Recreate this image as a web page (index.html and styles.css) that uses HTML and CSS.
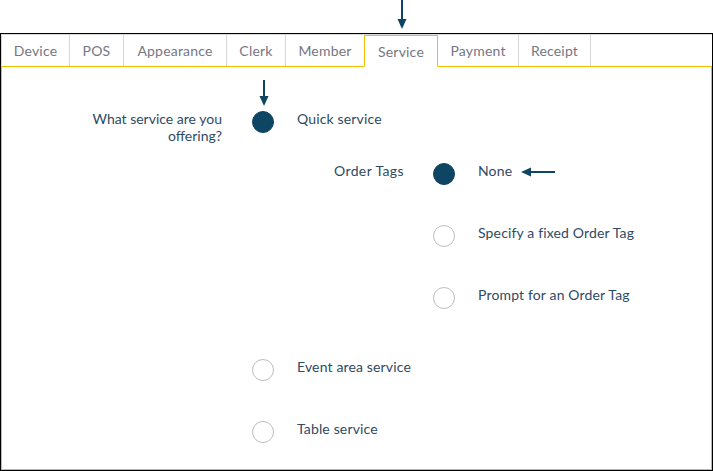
FILE: index.html
```html
<!DOCTYPE html>
<html>
<head>
<meta charset="utf-8">
<link rel="stylesheet" href="styles.css">
</head>
<body>
<div class="frame">
  <nav class="tabs">
    <div class="tab w-device">Device</div>
    <div class="tab w-pos">POS</div>
    <div class="tab w-appearance">Appearance</div>
    <div class="tab w-clerk">Clerk</div>
    <div class="tab w-member">Member</div>
    <div class="tab active w-service">Service</div>
    <div class="tab w-payment">Payment</div>
    <div class="tab last w-receipt">Receipt</div>
  </nav>
  <section class="content">
    <div class="row">
      <div class="q-label">What service are you offering?</div>
      <div class="options">
        <div class="opt"><span class="radio on"></span><span class="opt-text">Quick service</span></div>
        <div class="sub">
          <div class="sub-label">Order Tags</div>
          <div class="sub-options">
            <div class="opt"><span class="radio on"></span><span class="opt-text">None</span></div>
            <div class="opt gap39"><span class="radio"></span><span class="opt-text">Specify a fixed Order Tag</span></div>
            <div class="opt gap39"><span class="radio"></span><span class="opt-text">Prompt for an Order Tag</span></div>
          </div>
        </div>
        <div class="opt gap49"><span class="radio"></span><span class="opt-text">Event area service</span></div>
        <div class="opt gap39"><span class="radio"></span><span class="opt-text">Table service</span></div>
      </div>
    </div>
  </section>
</div>

<svg class="arrow a-top" width="12" height="30" viewBox="0 0 12 30"><rect x="5" y="0" width="2" height="21" fill="#0d4562"/><polygon points="1.5,19 10.5,19 6,29" fill="#0d4562"/></svg>
<svg class="arrow a-mid" width="12" height="30" viewBox="0 0 12 30"><rect x="5" y="0" width="2" height="18" fill="#0d4562"/><polygon points="1.5,16 10.5,16 6,26" fill="#0d4562"/></svg>
<svg class="arrow a-left" width="34" height="12" viewBox="0 0 34 12"><rect x="8" y="5" width="26" height="2" fill="#0d4562"/><polygon points="0,6 10,1.5 10,10.5" fill="#0d4562"/></svg>
</body>
</html>
```

FILE: styles.css
```css
* { box-sizing: border-box; }
html, body { margin: 0; padding: 0; background: #fff; }
body {
  font-family: "Lato", "Open Sans", sans-serif;
  font-size: 14px;
  width: 713px;
  height: 471px;
  position: relative;
  overflow: hidden;
}
.frame {
  margin-top: 33px;
  width: 713px;
  height: 438px;
  border: 1px solid #000;
  display: flex;
  flex-direction: column;
}
.tabs {
  display: flex;
  height: 33px;
  border-top: 1px solid #d9d9d9;
  border-bottom: 1px solid #f0c000;
  position: relative;
  z-index: 1;
}
.tab {
  height: 31px;
  border-left: 1px solid #d6d6d6;
  color: #767684;
  display: flex;
  align-items: center;
  justify-content: center;
  line-height: 17px;
  letter-spacing: 0.2px;
}
.tab.last { border-right: 1px solid #d6d6d6; }
.tab.active {
  border: 1px solid #f0c000;
  border-bottom: 1px solid #fff;
  height: 32px;
  background: #fff;
  margin-bottom: -1px;
}
.tab.active + .tab { border-left: none; }
.w-device { width: 68px; }
.w-pos { width: 54px; }
.w-appearance { width: 103px; }
.w-clerk { width: 59px; }
.w-member { width: 79px; }
.w-service { width: 74px; }
.w-payment { width: 80px; }
.w-receipt { width: 73px; }

.content {
  flex: 1;
  border: 1px solid #f0c000;
  border-top: none;
  padding-top: 43px;
}
.row { display: flex; align-items: flex-start; }
.q-label {
  width: 220px;
  text-align: right;
  color: #2f4a63;
  line-height: 17px;
  padding-left: 80px;
}
.options { margin-left: 30px; display: flex; flex-direction: column; }
.opt { display: flex; align-items: flex-start; }
.opt-text { color: #2f4a63; line-height: 17px; margin-left: 23px; white-space: nowrap; letter-spacing: 0.15px; }
.radio {
  width: 22px;
  height: 22px;
  margin-top: 1px;
  border-radius: 50%;
  border: 1px solid #bdbdbd;
  background: #fff;
  flex: none;
}
.radio.on { background: #0d4562; border-color: #0d4562; }
.sub { display: flex; align-items: flex-start; margin-top: 29px; }
.sub-label {
  width: 152px;
  text-align: right;
  color: #2f4a63;
  line-height: 17px;
  letter-spacing: 0.4px;
}
.sub-options { margin-left: 29px; display: flex; flex-direction: column; }
.gap39 { margin-top: 39px; }
.gap49 { margin-top: 49px; }

.arrow { position: absolute; }
.a-top { left: 396px; top: 0; }
.a-mid { left: 258px; top: 80px; }
.a-left { left: 521px; top: 166px; }
```
